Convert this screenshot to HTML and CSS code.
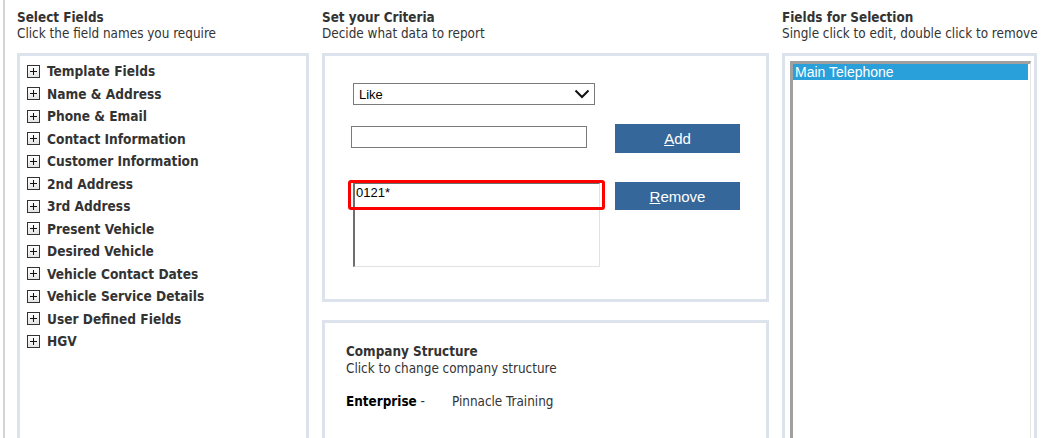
FILE: index.html
```html
<!DOCTYPE html>
<html lang="en">
<head>
    <meta charset="UTF-8">
    <title>Report Criteria</title>
    <link rel="stylesheet" href="styles.css">
</head>
<body>
    <div class="page">
        <div class="column col-fields">
            <div class="col-title">Select Fields</div>
            <div class="col-sub">Click the field names you require</div>
            <div class="panel tree-panel">
                <ul class="tree">
                    <li><span class="plus"></span>Template Fields</li>
                    <li><span class="plus"></span>Name &amp; Address</li>
                    <li><span class="plus"></span>Phone &amp; Email</li>
                    <li><span class="plus"></span>Contact Information</li>
                    <li><span class="plus"></span>Customer Information</li>
                    <li><span class="plus"></span>2nd Address</li>
                    <li><span class="plus"></span>3rd Address</li>
                    <li><span class="plus"></span>Present Vehicle</li>
                    <li><span class="plus"></span>Desired Vehicle</li>
                    <li><span class="plus"></span>Vehicle Contact Dates</li>
                    <li><span class="plus"></span>Vehicle Service Details</li>
                    <li><span class="plus"></span>User Defined Fields</li>
                    <li><span class="plus"></span>HGV</li>
                </ul>
            </div>
        </div>

        <div class="column col-criteria">
            <div class="col-title">Set your Criteria</div>
            <div class="col-sub">Decide what data to report</div>
            <div class="panel criteria-panel">
                <div class="dropdown">
                    <span>Like</span>
                    <svg width="16" height="10" viewBox="0 0 16 10"><path d="M1.5 1.5 L8 8 L14.5 1.5" fill="none" stroke="#111" stroke-width="2"/></svg>
                </div>
                <div class="crit-row">
                    <input class="value-input" type="text">
                    <button class="btn btn-add"><u>A</u>dd</button>
                </div>
                <div class="crit-row crit-row-list">
                    <div class="value-list">
                        <div class="value-item">0121*</div>
                        <div class="highlight"></div>
                    </div>
                    <button class="btn btn-remove"><u>R</u>emove</button>
                </div>
            </div>
            <div class="panel company-panel">
                <div class="company-title">Company Structure</div>
                <div class="company-sub">Click to change company structure</div>
                <div class="company-line"><b>Enterprise</b> -<span class="company-name">Pinnacle Training</span></div>
            </div>
        </div>

        <div class="column col-selection">
            <div class="col-title">Fields for Selection</div>
            <div class="col-sub nowrap">Single click to edit, double click to remove</div>
            <div class="panel selection-panel">
                <div class="selection-list">
                    <div class="selection-item selected">Main Telephone</div>
                </div>
            </div>
        </div>
    </div>
</body>
</html>
```

FILE: styles.css
```css
html, body {
    margin: 0;
    padding: 0;
    background: #fff;
    overflow: hidden;
}
body {
    font-family: "DejaVu Sans Condensed", "DejaVu Sans", sans-serif;
    font-size: 13.4px;
    color: #333;
}
.page {
    display: flex;
    gap: 13px;
    height: 438px;
    overflow: hidden;
    margin-left: 3px;
    padding: 10px 0 0 12px;
    border-left: 2px solid #d4d4d4;
    box-sizing: border-box;
}
.column {
    display: flex;
    flex-direction: column;
    flex: none;
}
.col-fields { width: 292px; }
.col-criteria { width: 447px; }
.col-selection { width: 255px; }
.col-title {
    font-weight: bold;
    line-height: 16px;
}
.col-sub {
    line-height: 16px;
    margin-bottom: 11px;
}
.nowrap { white-space: nowrap; }
.panel {
    border: 3px solid #dde3ec;
    background: #fff;
    box-sizing: border-box;
    flex: none;
}

/* field tree */
.tree-panel { height: 420px; }
.tree {
    list-style: none;
    margin: 0;
    padding: 4px 0 0 7px;
}
.tree li {
    display: flex;
    align-items: center;
    height: 22.5px;
    font-weight: bold;
    font-size: 13.6px;
    color: #333;
}
.plus {
    position: relative;
    width: 11px;
    height: 11px;
    border: 1px solid #333;
    background: linear-gradient(#fff, #e4e4e4);
    margin-right: 7px;
    flex: none;
}
.plus::before,
.plus::after {
    content: "";
    position: absolute;
    background: #111;
}
.plus::before { left: 2px; top: 5px; width: 7px; height: 1px; }
.plus::after { left: 5px; top: 2px; width: 1px; height: 7px; }

/* criteria */
.criteria-panel {
    height: 249px;
    padding: 27px 0 0 26px;
}
.dropdown {
    display: flex;
    align-items: center;
    justify-content: space-between;
    width: 242px;
    height: 22px;
    margin-left: 2px;
    padding: 0 4px 0 5px;
    border: 1px solid #7a7a7a;
    box-sizing: border-box;
    font-family: "Liberation Sans", Arial, sans-serif;
    font-size: 13px;
    color: #000;
}
.crit-row {
    display: flex;
    align-items: flex-start;
    margin-top: 19px;
}
.value-input {
    width: 236px;
    height: 22px;
    margin: 2px 0 0 0;
    border: 1px solid #7a7a7a;
    box-sizing: border-box;
    padding: 0 4px;
}
.btn {
    width: 125px;
    height: 29px;
    border: none;
    background: #35679a;
    color: #fff;
    font-family: "Liberation Sans", Arial, sans-serif;
    font-size: 15px;
    cursor: pointer;
}
.btn-add { margin-left: 28px; }
.crit-row-list { margin-top: 28px; }
.value-list {
    position: relative;
    width: 247px;
    height: 84px;
    margin: 2px 0 0 2px;
    border: 1px solid #e2e2e2;
    border-left: 2px solid #6e6e6e;
    border-top: 1px solid #6e6e6e;
    box-sizing: border-box;
}
.value-item {
    padding: 0 0 0 1px;
    line-height: 17px;
    font-family: "Liberation Sans", Arial, sans-serif;
    font-size: 13px;
    color: #000;
}
.highlight {
    position: absolute;
    left: -7px;
    top: -4px;
    width: 257px;
    height: 30px;
    border: 3px solid #f00;
    border-radius: 3px;
    box-sizing: border-box;
}
.btn-remove {
    height: 28px;
    margin: 1px 0 0 15px;
}

/* company structure */
.company-panel {
    height: 150px;
    margin-top: 18px;
    padding: 20px 0 0 21px;
}
.company-title {
    font-weight: bold;
    line-height: 17px;
}
.company-sub { line-height: 17px; }
.company-line {
    margin-top: 16px;
    line-height: 17px;
}
.company-line b { color: #000; }
.company-name { margin-left: 27px; }

/* fields for selection */
.selection-panel {
    height: 420px;
    padding: 5px 0 0 5px;
}
.selection-list {
    width: 241px;
    height: 400px;
    border-top: 3px solid #a0a0a0;
    border-left: 3px solid #a0a0a0;
    border-right: 1px solid #e6e6e6;
    box-sizing: border-box;
}
.selection-item {
    height: 16px;
    line-height: 16px;
    padding-left: 2px;
    margin-right: 2px;
    font-family: "Liberation Sans", Arial, sans-serif;
    font-size: 14px;
}
.selection-item.selected {
    background: #29a0da;
    color: #fff;
}
```
